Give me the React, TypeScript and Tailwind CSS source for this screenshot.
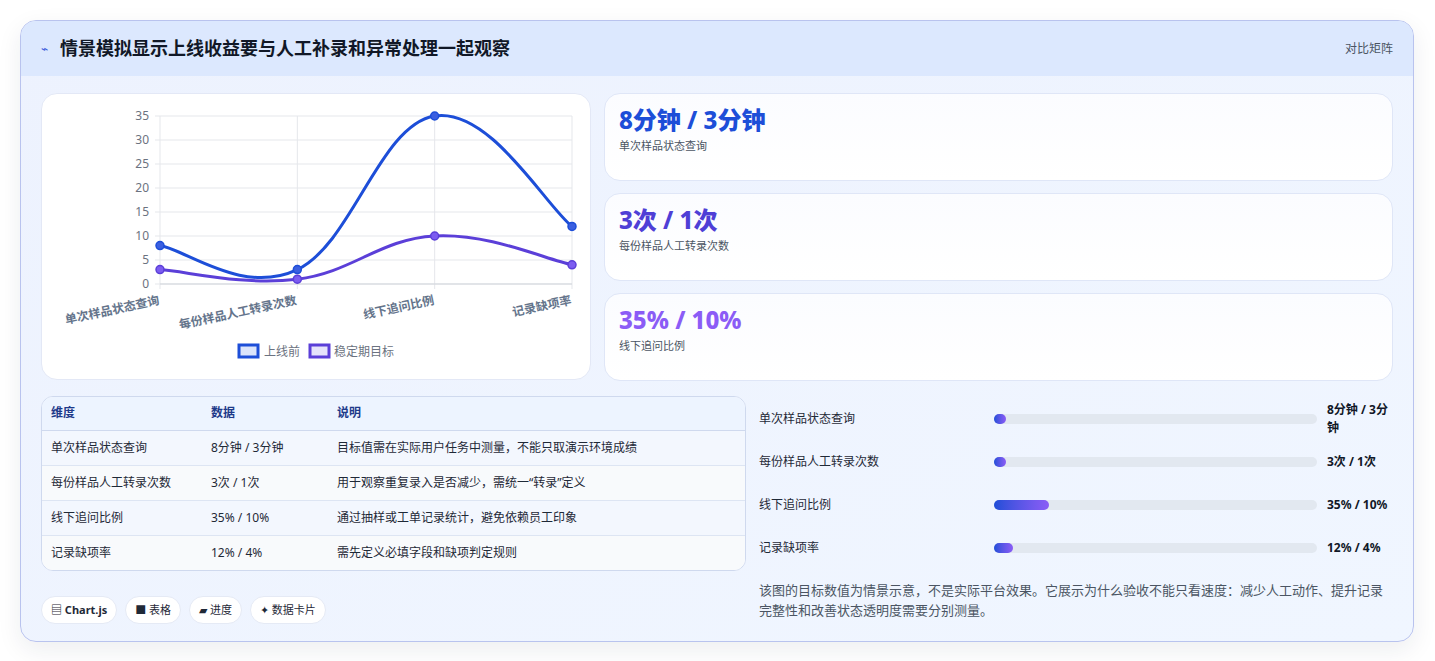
import React from "react"

const FONT = { fontFamily: '"Noto Sans", "Noto Sans CJK SC", sans-serif' }

const labels = ["单次样品状态查询", "每份样品人工转录次数", "线下追问比例", "记录缺项率"]
const before = [8, 3, 35, 12]
const target = [3, 1, 10, 4]

// plot area in card-local coords
const X0 = 118, X1 = 530, Y0 = 190, Y1 = 22
const px = (i: number) => X0 + ((X1 - X0) / 3) * i
const py = (v: number) => Y0 - ((Y0 - Y1) / 35) * v

function curve(vals: number[]) {
  const pts = vals.map((v, i) => [px(i), py(v)])
  const t = 0.2
  let d = `M${pts[0][0]},${pts[0][1]}`
  for (let i = 0; i < pts.length - 1; i++) {
    const p0 = pts[i - 1] || pts[i]
    const p1 = pts[i]
    const p2 = pts[i + 1]
    const p3 = pts[i + 2] || p2
    const c1 = [p1[0] + (p2[0] - p0[0]) * t, p1[1] + (p2[1] - p0[1]) * t]
    const c2 = [p2[0] - (p3[0] - p1[0]) * t, p2[1] - (p3[1] - p1[1]) * t]
    d += ` C${c1[0]},${c1[1]} ${c2[0]},${c2[1]} ${p2[0]},${p2[1]}`
  }
  return d
}

function Chart() {
  return (
    <svg width="549" height="286" className="block">
      {[0, 5, 10, 15, 20, 25, 30, 35].map((v) => (
        <g key={v}>
          <line x1={X0} x2={X1} y1={py(v)} y2={py(v)} stroke="#e5e7eb" strokeWidth="1" />
          <line x1={X0 - 5} x2={X0} y1={py(v)} y2={py(v)} stroke="#e5e7eb" />
          <text x={X0 - 11} y={py(v) + 4} textAnchor="end" fontSize="12" fill="#6b7280">{v}</text>
        </g>
      ))}
      {[0, 1, 2, 3].map((i) => (
        <line key={i} x1={px(i)} x2={px(i)} y1={Y1} y2={Y0 + 5} stroke="#e5e7eb" />
      ))}
      <line x1={X0} x2={X1} y1={Y0} y2={Y0} stroke="#d1d5db" />
      {labels.map((l, i) => (
        <text key={l} x={px(i)} y={Y0 + 20} textAnchor="end" fontSize="12" fontWeight="600" fill="#64748b"
          transform={`rotate(-12 ${px(i)} ${Y0 + 20})`}>{l}</text>
      ))}
      <path d={curve(before)} fill="none" stroke="#1d4ed8" strokeWidth="3" />
      <path d={curve(target)} fill="none" stroke="#5b3fd8" strokeWidth="3" />
      {before.map((v, i) => <circle key={"b" + i} cx={px(i)} cy={py(v)} r="4" fill="#3b5fe0" stroke="#1d4ed8" strokeWidth="1.5" />)}
      {target.map((v, i) => <circle key={"t" + i} cx={px(i)} cy={py(v)} r="4" fill="#7c5cf0" stroke="#5b3fd8" strokeWidth="1.5" />)}
      <rect x="197" y="251" width="19" height="12" fill="#dbe4fb" stroke="#1d4ed8" strokeWidth="3" />
      <text x="222" y="262" fontSize="12" fill="#6b7280">上线前</text>
      <rect x="268" y="251" width="19" height="12" fill="#e6e3fb" stroke="#5b3fd8" strokeWidth="3" />
      <text x="292" y="262" fontSize="12" fill="#6b7280">稳定期目标</text>
    </svg>
  )
}

const stats = [
  { v: "8分钟 / 3分钟", l: "单次样品状态查询", c: "text-[#1d4ed8]" },
  { v: "3次 / 1次", l: "每份样品人工转录次数", c: "text-[#4f3fd6]" },
  { v: "35% / 10%", l: "线下追问比例", c: "text-[#8b5cf6]" },
]

const rows = [
  ["单次样品状态查询", "8分钟 / 3分钟", "目标值需在实际用户任务中测量，不能只取演示环境成绩"],
  ["每份样品人工转录次数", "3次 / 1次", "用于观察重复录入是否减少，需统一“转录”定义"],
  ["线下追问比例", "35% / 10%", "通过抽样或工单记录统计，避免依赖员工印象"],
  ["记录缺项率", "12% / 4%", "需先定义必填字段和缺项判定规则"],
]

const bars = [
  { l: "单次样品状态查询", v: "8分钟 / 3分钟", w: 12, start: 992, end: 1312 },
  { l: "每份样品人工转录次数", v: "3次 / 1次", w: 12, start: 996, end: 1323 },
  { l: "线下追问比例", v: "35% / 10%", w: 55, start: 996, end: 1323 },
  { l: "记录缺项率", v: "12% / 4%", w: 19, start: 996, end: 1323 },
]

export default function App() {
  return (
    <div className="min-h-screen bg-white p-5 pr-[21px]" style={FONT}>
      <div className="rounded-2xl border border-[#b9c3ee] bg-gradient-to-br from-[#edf2fe] to-[#f0f6ff] overflow-hidden shadow-[0_8px_24px_rgba(30,41,59,0.08)]">
        <div className="h-[55px] bg-[#dce8fe] flex items-center justify-between px-5">
          <div className="flex items-center gap-3">
            <span className="text-[#3b5bdb] text-xs">⌁</span>
            <h1 className="text-[18px] font-bold text-[#111827]">情景模拟显示上线收益要与人工补录和异常处理一起观察</h1>
          </div>
          <span className="text-xs text-[#4b5563]">对比矩阵</span>
        </div>

        <div className="px-5 pt-[17px] pb-[17px]">
          <div className="flex gap-[13px]">
            <div className="w-[550px] h-[287px] rounded-2xl bg-white border border-[#e3e8f6]">
              <Chart />
            </div>
            <div className="flex-1 flex flex-col gap-[12px]">
              {stats.map((s) => (
                <div key={s.l} className="h-[88px] rounded-2xl border border-[#dfe6f7] bg-gradient-to-b from-[#fbfcff] to-white px-[14px] pt-[10px]">
                  <div className={`text-[24px] font-extrabold leading-[32px] ${s.c}`}>{s.v}</div>
                  <div className="text-[11px] text-[#4b5563] mt-[2px]">{s.l}</div>
                </div>
              ))}
            </div>
          </div>

          <div className="flex gap-[13px] mt-[15px]">
            <div className="w-[705px] flex flex-col">
              <div className="rounded-xl border border-[#cfd9ee] overflow-hidden bg-white">
                <table className="w-full text-[12px] text-[#1f2937]">
                  <thead>
                    <tr className="bg-[#edf4ff] h-[33px] text-left text-[#1e3a8a] font-semibold border-b border-[#cfd9ee]">
                      <th className="pl-[9px] w-[169px] font-semibold">维度</th>
                      <th className="w-[126px] font-semibold">数据</th>
                      <th className="font-semibold">说明</th>
                    </tr>
                  </thead>
                  <tbody>
                    {rows.map((r, i) => (
                      <tr key={r[0]} className={`h-[35px] ${i < 3 ? "border-b border-[#dde5f3]" : ""} ${i % 2 ? "bg-[#f8fafc]" : "bg-[#f3f7fe]"}`}>
                        <td className="pl-[9px]">{r[0]}</td>
                        <td>{r[1]}</td>
                        <td>{r[2]}</td>
                      </tr>
                    ))}
                  </tbody>
                </table>
              </div>
              <div className="flex gap-2 mt-[25px]">
                {["▤ Chart.js", "■ 表格", "▰ 进度", "✦ 数据卡片"].map((c, i) => (
                  <span key={c} className={`h-[28px] px-[9px] flex items-center rounded-full bg-white border border-[#e5eaf5] text-[11px] text-[#1f2937] ${i === 0 ? "font-bold" : ""}`}>{c}</span>
                ))}
              </div>
            </div>

            <div className="flex-1 flex flex-col">
              {bars.map((b) => (
                <div key={b.l} className="h-[46px] flex items-center text-[12px] text-[#1f2937] -mt-[3px] first:mt-0">
                  <span className="w-[235px] shrink-0">{b.l}</span>
                  <div className="flex-1 h-[10px] rounded-full bg-[#e2e8f0] mr-[10px]">
                    <div className="h-full rounded-full bg-gradient-to-r from-[#1d4ed8] to-[#8b5cf6] min-w-[12px]" style={{ width: `${b.w}px` }} />
                  </div>
                  <span className="w-[66px] shrink-0 font-bold text-[#111827]">{b.v}</span>
                </div>
              ))}
              <p className="mt-[9px] text-[13px] leading-[20px] text-[#4b5563]">
                该图的目标数值为情景示意，不是实际平台效果。它展示为什么验收不能只看速度：减少人工动作、提升记录完整性和改善状态透明度需要分别测量。
              </p>
            </div>
          </div>
        </div>
      </div>
    </div>
  )
}
